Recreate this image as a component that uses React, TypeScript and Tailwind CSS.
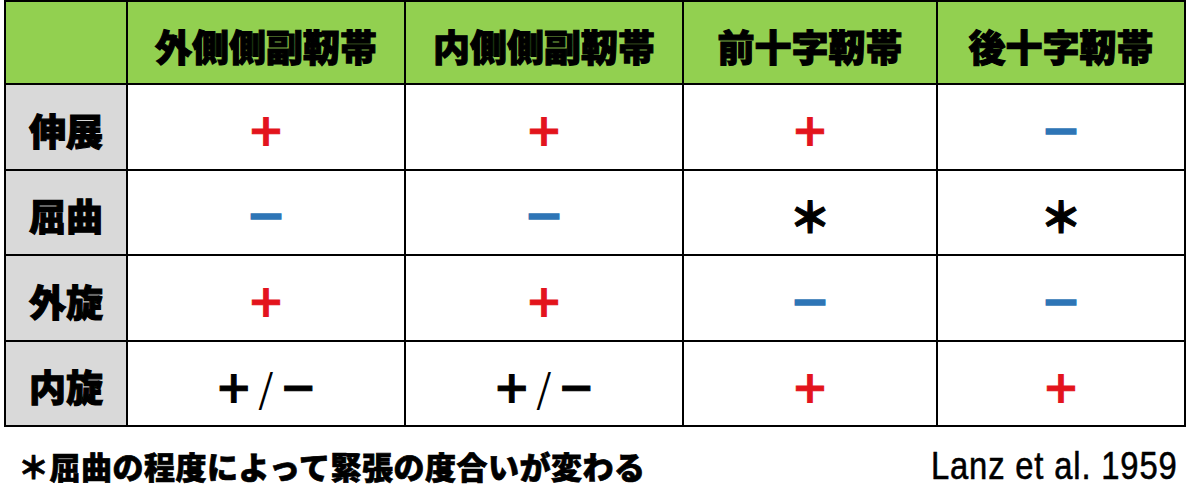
type Mark = "plus" | "minus" | "star" | "both";

interface Row {
  label: string;
  marks: Mark[];
}

const headers = ["外側側副靭帯", "内側側副靭帯", "前十字靭帯", "後十字靭帯"];

const rows: Row[] = [
  { label: "伸展", marks: ["plus", "plus", "plus", "minus"] },
  { label: "屈曲", marks: ["minus", "minus", "star", "star"] },
  { label: "外旋", marks: ["plus", "plus", "minus", "minus"] },
  { label: "内旋", marks: ["both", "both", "plus", "plus"] },
];

function Cell({ mark }: { mark: Mark }) {
  if (mark === "plus") {
    return (
      <span className="text-[39px] font-black leading-none text-[#e3141c] [-webkit-text-stroke:1px_#e3141c]">＋</span>
    );
  }
  if (mark === "minus") {
    return (
      <span className="text-[42px] font-black leading-none text-[#2e75b6] [-webkit-text-stroke:1.5px_#2e75b6]">
        －
      </span>
    );
  }
  if (mark === "star") {
    return (
      <span className="text-[42px] font-black leading-none text-black [-webkit-text-stroke:1px_black]">＊</span>
    );
  }
  return (
    <span className="flex items-center text-[39px] font-black leading-none text-black [-webkit-text-stroke:1px_black]">
      ＋<span className="mx-[5px] font-normal [-webkit-text-stroke:0px_black]">/</span>－
    </span>
  );
}

export default function App() {
  return (
    <div className="w-[1200px] h-[504px] bg-white font-['Noto_Sans_CJK_JP',sans-serif] text-black">
      <div className="ml-[4px] inline-grid grid-cols-[120px_276px_276px_252px_246px] grid-rows-[81px_84px_83px_84px_83px] gap-[2px] bg-black p-[2px]">
        <div className="bg-[#92d050]" />
        {headers.map((h) => (
          <div key={h} className="flex items-center justify-center bg-[#92d050] pt-[7px]">
            <span className="text-[37px] font-black leading-none [-webkit-text-stroke:1.1px_black]">{h}</span>
          </div>
        ))}

        {rows.map((row) => (
          <>
            <div key={row.label} className="flex items-center justify-center bg-[#d9d9d9] pt-[6px]">
              <span className="text-[37px] font-black leading-none [-webkit-text-stroke:1.1px_black]">
                {row.label}
              </span>
            </div>
            {row.marks.map((m, i) => (
              <div key={row.label + i} className="flex items-center justify-center bg-white pt-[5px]">
                <Cell mark={m} />
              </div>
            ))}
          </>
        ))}
      </div>

      <div className="flex h-[77px] items-center justify-between pl-[18px] pr-[22px]">
        <span className="text-[31px] font-black leading-none tracking-[0.5px] [-webkit-text-stroke:0.7px_black]">
          ＊屈曲の程度によって緊張の度合いが変わる
        </span>
        <span className="inline-block origin-right scale-x-[0.84] font-['Liberation_Sans',sans-serif] text-[39px] leading-none tracking-[1px] [-webkit-text-stroke:0.6px_black]">
          Lanz et al. 1959
        </span>
      </div>
    </div>
  );
}
